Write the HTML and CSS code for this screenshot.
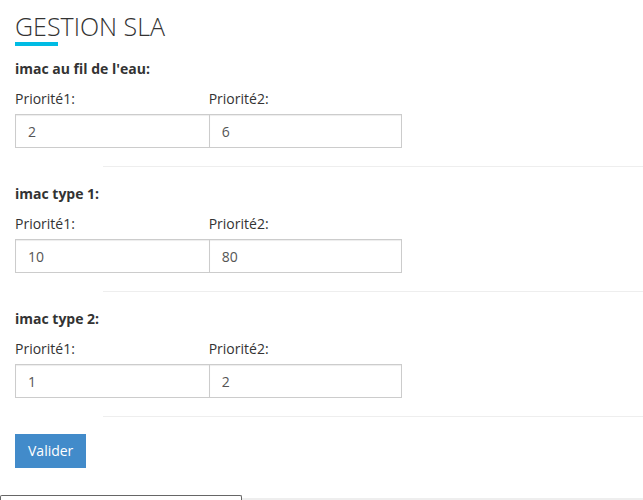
FILE: index.html
```html
<!DOCTYPE html>
<html lang="fr">
<head>
<meta charset="utf-8">
<title>Gestion SLA</title>
<link rel="stylesheet" href="styles.css">
</head>
<body>
<main class="page">
  <h1 class="title">GESTION SLA</h1>
  <form class="form">
    <fieldset class="group">
      <legend class="legend">imac au fil de l'eau:</legend>
      <div class="fields">
        <div class="field"><label for="eau-p1">Priorité1:</label><input id="eau-p1" type="text" value="2"></div>
        <div class="field"><label for="eau-p2">Priorité2:</label><input id="eau-p2" type="text" value="6"></div>
      </div>
    </fieldset>
    <hr class="divider">
    <fieldset class="group">
      <legend class="legend">imac type 1:</legend>
      <div class="fields">
        <div class="field"><label for="t1-p1">Priorité1:</label><input id="t1-p1" type="text" value="10"></div>
        <div class="field"><label for="t1-p2">Priorité2:</label><input id="t1-p2" type="text" value="80"></div>
      </div>
    </fieldset>
    <hr class="divider">
    <fieldset class="group">
      <legend class="legend">imac type 2:</legend>
      <div class="fields">
        <div class="field"><label for="t2-p1">Priorité1:</label><input id="t2-p1" type="text" value="1"></div>
        <div class="field"><label for="t2-p2">Priorité2:</label><input id="t2-p2" type="text" value="2"></div>
      </div>
    </fieldset>
    <hr class="divider">
    <button class="submit" type="submit">Valider</button>
  </form>
</main>
<footer class="status"><div class="status-tab"></div><div class="status-line"></div></footer>
</body>
</html>
```

FILE: styles.css
```css
* {
  box-sizing: border-box;
}

body {
  display: flex;
  flex-direction: column;
  min-height: 100vh;
  margin: 0;
  overflow: hidden;
  background: #fff;
  color: #333;
  font: 14px/20px "Open Sans", sans-serif;
}

.page {
  flex: 1;
  padding: 10px 0 0 15px;
}

.title {
  margin: 0 0 13px;
  font-size: 25px;
  font-weight: 300;
  line-height: 32px;
}

.title::after {
  content: "";
  display: block;
  width: 43px;
  height: 4px;
  background: #00bce4;
}

.group {
  min-width: 0;
  margin: 0;
  padding: 0;
  border: 0;
}

.legend {
  margin-bottom: 10px;
  padding: 0;
  font-weight: 700;
}

.fields {
  display: grid;
  grid-template-columns: 1fr 1fr;
  width: calc(62% - 2px);
}

.field label {
  display: block;
  margin-bottom: 5px;
}

.field input {
  display: block;
  width: 100%;
  height: 34px;
  padding: 6px 12px;
  border: 1px solid #ccc;
  border-radius: 0;
  background: #fff;
  box-shadow: inset 0 1px 1px rgba(0, 0, 0, 0.075);
  color: #555;
  font: inherit;
}

.field:first-child input {
  border-right: 0;
}

.divider {
  height: 1px;
  margin: 18px 0 17px 88px;
  border: 0;
  background: #eee;
}

.submit {
  height: 34px;
  padding: 6px 12px;
  border: 1px solid #428bca;
  background: #428bca;
  color: #fff;
  font: inherit;
  font-weight: 500;
}

.status {
  display: flex;
  align-items: flex-end;
}

.status-tab {
  width: 242px;
  height: 5px;
  border: 1px solid #666;
  border-width: 1px 1px 0 1px;
  border-radius: 2px 2px 0 0;
}

.status-line {
  flex: 1;
  height: 2px;
  background: #eee;
}
```
